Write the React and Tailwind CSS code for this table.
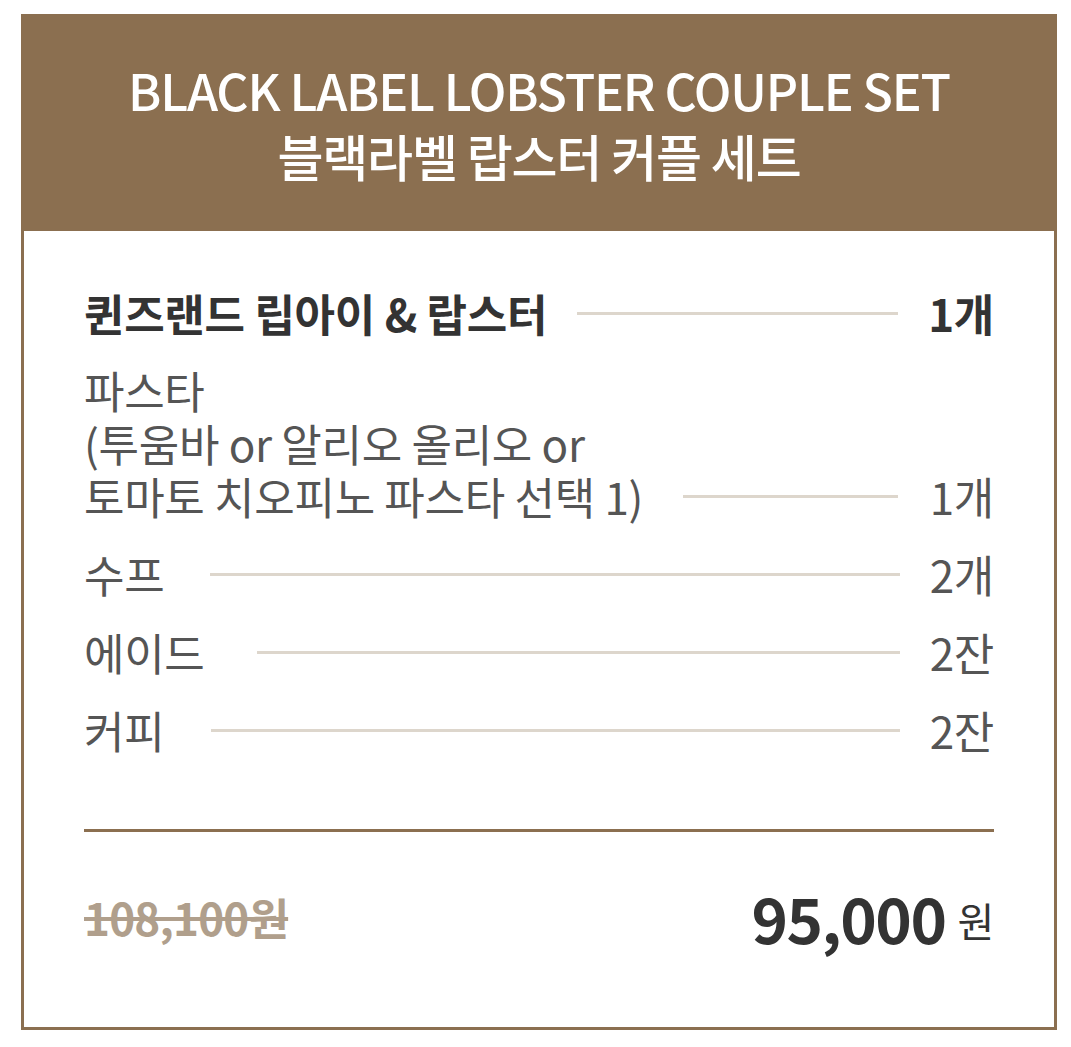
export default function App() {
  const font = { fontFamily: '"Noto Sans CJK KR", "Noto Sans", sans-serif' };
  const Line = ({ ml }) => <div className={`flex-1 h-[3px] bg-[#ddd6cc] mr-[30px] ${ml}`} />;
  return (
    <div className="bg-white w-[1071px] h-[1047px] pl-[21px] pt-[14px]" style={font}>
      <div className="w-[1036px] h-[1016px] border-[3px] border-[#8b6f50] flex flex-col">
        <div className="h-[214px] bg-[#8b6f50] flex flex-col items-center justify-center text-white pb-[4px]">
          <div className="text-[50px] leading-[66px] font-medium tracking-[-1.2px]">BLACK LABEL LOBSTER COUPLE SET</div>
          <div className="text-[50px] leading-[66px] font-medium tracking-[-1.2px]">블랙라벨 랍스터 커플 세트</div>
        </div>
        <div className="flex-1 px-[60px] pt-[56px] text-[44px] leading-[53px] tracking-[-0.3px]">
          <div className="flex items-center text-[#333] font-bold">
            <span>퀸즈랜드 립아이 &amp; 랍스터</span>
            <Line ml="ml-[30px]" />
            <span>1개</span>
          </div>
          <div className="flex items-end text-[#555] mt-[24px]">
            <span>파스타<br />(투움바 or 알리오 올리오 or<br />토마토 치오피노 파스타 선택 1)</span>
            <div className="flex-1 h-[3px] bg-[#ddd6cc] ml-[40px] mr-[32px] mb-[25px]" />
            <span>1개</span>
          </div>
          <div className="flex items-center text-[#555] mt-[25px]">
            <span>수프</span>
            <Line ml="ml-[46px]" />
            <span>2개</span>
          </div>
          <div className="flex items-center text-[#555] mt-[25px]">
            <span>에이드</span>
            <Line ml="ml-[52px]" />
            <span>2잔</span>
          </div>
          <div className="flex items-center text-[#555] mt-[25px]">
            <span>커피</span>
            <Line ml="ml-[47px]" />
            <span>2잔</span>
          </div>
          <div className="h-[3px] bg-[#8b6f50] mt-[72px]" />
          <div className="flex items-center justify-between mt-[45px]">
            <span className="text-[44px] font-bold text-[#b09f8c] line-through tracking-[-0.8px]">108,100원</span>
            <span className="flex items-center text-[#333]">
              <span className="text-[62px] font-bold leading-[80px] tracking-[-1.5px]">95,000</span>
              <span className="text-[40px] ml-[12px] mt-[6px]">원</span>
            </span>
          </div>
        </div>
      </div>
    </div>
  );
}
